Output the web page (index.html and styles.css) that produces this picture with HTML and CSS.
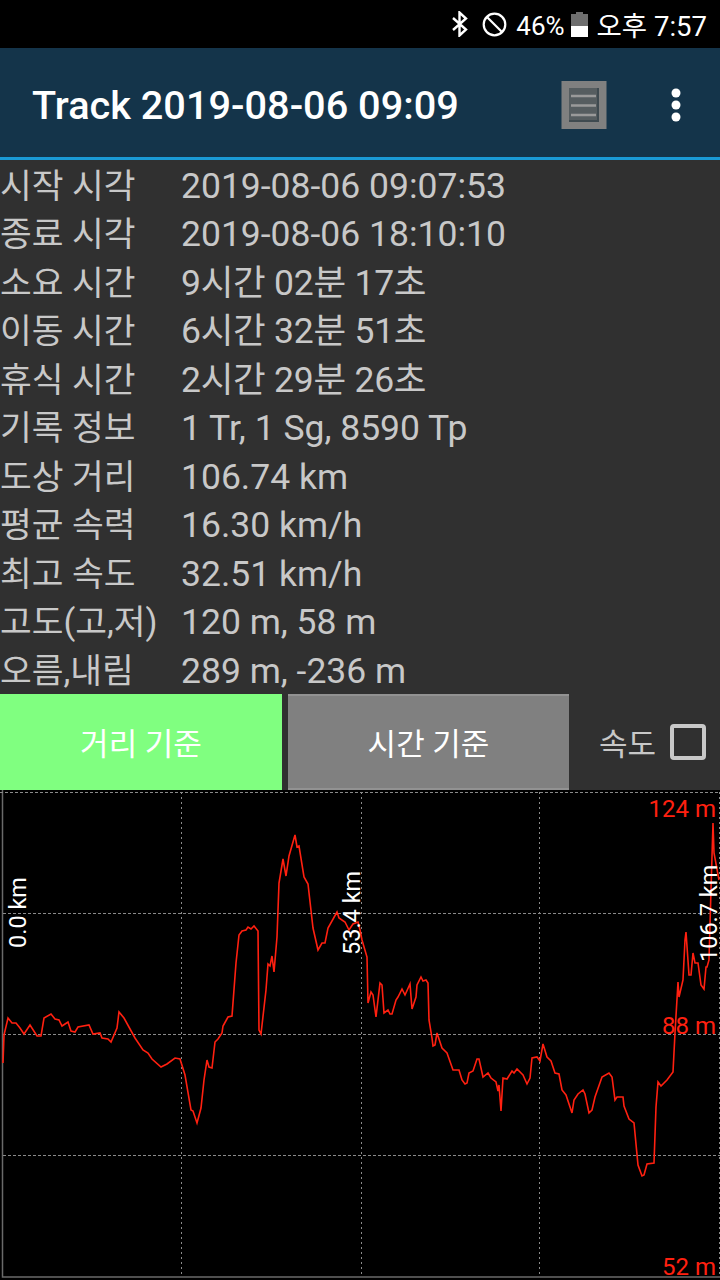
FILE: index.html
```html
<!DOCTYPE html>
<html lang="ko">
<head>
    <meta charset="UTF-8">
    <meta name="viewport" content="width=device-width, initial-scale=1.0">
    <title>Track 2019-08-06 09:09</title>
    <link rel="stylesheet" href="styles.css">
</head>
<body>
    <div class="statusBar">
        <svg class="btIcon" width="18" height="26" viewBox="0 0 18 26">
            <path d="M2 7 L15 18.5 L8.5 24.5 L8.5 1.5 L15 7.5 L2 19" fill="none" stroke="#fff" stroke-width="2.4"/>
        </svg>
        <svg class="dndIcon" width="25" height="25" viewBox="0 0 25 25">
            <circle cx="12.5" cy="12.5" r="10.8" fill="none" stroke="#fff" stroke-width="2.2"/>
            <path d="M5 5 L20 20" stroke="#fff" stroke-width="2.2"/>
        </svg>
        <span class="batteryText">46%</span>
        <svg class="batteryIcon" width="17" height="25" viewBox="0 0 17 25">
            <rect x="5" y="0" width="7" height="3" fill="#6e6e6e"/>
            <rect x="0" y="2" width="17" height="12" fill="#6e6e6e"/>
            <rect x="0" y="14" width="17" height="11" fill="#fff"/>
        </svg>
        <span class="clock">오후 7:57</span>
    </div>

    <header class="appBar">
        <h1>Track 2019-08-06 09:09</h1>
        <svg class="listIcon" width="48" height="50" viewBox="0 0 48 50">
            <rect x="1.5" y="1" width="45" height="48" fill="#808080"/>
            <rect x="9" y="8" width="30" height="34" fill="#3f4a50"/>
            <rect x="9" y="8" width="28" height="32" fill="#565d60"/>
            <path d="M11 16 H36 M11 25.500 H36 M11 35 H36" stroke="#9a9a9a" stroke-width="2.400"/>
        </svg>
        <svg class="moreIcon" width="10" height="34" viewBox="0 0 10 34">
            <circle cx="5" cy="5" r="4.500" fill="#fff"/>
            <circle cx="5" cy="17" r="4.500" fill="#fff"/>
            <circle cx="5" cy="29" r="4.500" fill="#fff"/>
        </svg>
    </header>

    <main>
        <dl class="stats">
            <dt>시작 시각</dt><dd>2019-08-06 09:07:53</dd>
            <dt>종료 시각</dt><dd>2019-08-06 18:10:10</dd>
            <dt>소요 시간</dt><dd class="duration">9시간 02분 17초</dd>
            <dt>이동 시간</dt><dd class="duration">6시간 32분 51초</dd>
            <dt>휴식 시간</dt><dd class="duration">2시간 29분 26초</dd>
            <dt>기록 정보</dt><dd>1 Tr, 1 Sg, 8590 Tp</dd>
            <dt>도상 거리</dt><dd>106.74 km</dd>
            <dt>평균 속력</dt><dd>16.30 km/h</dd>
            <dt>최고 속도</dt><dd>32.51 km/h</dd>
            <dt>고도(고,저)</dt><dd>120 m, 58 m</dd>
            <dt>오름,내림</dt><dd>289 m, -236 m</dd>
        </dl>

        <div class="controls">
            <button class="modeBtn modeBtnActive">거리 기준</button>
            <button class="modeBtn">시간 기준</button>
            <label class="speedToggle">속도<span class="checkBox"></span></label>
        </div>

        <svg class="chart" width="720" height="490" viewBox="0 790 720 490">
            <path class="gridSolid" d="M2.500 790 V1277 H720"/>
            <path class="gridH" d="M0 792.500 H720 M3 913.500 H720 M3 1034.500 H720 M3 1155.500 H720"/>
            <path class="gridV" d="M181.500 792 V1277 M361.500 792 V1277 M539.500 792 V1277 M719.500 792 V1277"/>
            <polyline class="track" points="3,1063 4,1035 8,1018 12,1023 16,1023 20,1028 24,1034 30,1025 37,1036 41,1036 44,1018 51,1014 55,1019 59,1020 62,1026 68,1022 71,1031 75,1032 78,1027 89,1025 93,1034 100,1033 102,1038 108,1039 111,1042 117,1028 119,1012 124,1018 135,1038 143,1050 148,1053 152,1059 161,1067 167,1064 175,1058 180,1059 185,1075 191,1110 193,1111 197,1123 201,1108 204,1080 207,1060 209,1067 212,1068 215,1042 218,1039 222,1033 223,1026 228,1017 232,1016 236,963 239,935 242,931 246,930 248,927 251,929 254,926 258,931 259,1030 261,1034 266,990 268,964 270,966 272,956 274,972 277,937 279,883 283,859 286,876 289,856 295,835 297,847 299,846 304,877 308,884 313,928 318,950 322,943 325,943 328,928 337,912 339,918 345,922 349,930 353,924 358,922 360,930 362,940 367,957 368,1003 371,992 373,995 376,1017 380,983 382,985 384,1013 388,1010 390,1014 392,1014 396,1000 398,997 402,989 405,995 410,984 412,1009 416,997 417,985 421,977 423,981 426,980 428,983 429,1020 432,1038 433,1046 435,1045 437,1033 442,1048 447,1053 453,1070 459,1070 462,1080 465,1084 467,1083 469,1073 473,1071 477,1059 479,1059 483,1077 488,1073 491,1078 496,1082 498,1091 499,1085 501,1111 503,1078 507,1079 512,1071 514,1073 517,1069 523,1075 527,1084 530,1078 532,1058 537,1057 540,1061 543,1044 547,1057 551,1061 555,1073 559,1074 562,1090 566,1095 572,1113 574,1100 578,1094 583,1090 585,1094 589,1113 592,1110 595,1097 602,1077 609,1073 612,1077 615,1100 617,1097 623,1097 624,1106 629,1119 634,1123 638,1165 642,1176 644,1175 647,1164 654,1163 656,1107 658,1082 661,1086 667,1080 673,1072 675,1033 678,982 679,997 683,980 685,940 686,932 689,975 691,975 693,953 695,963 698,963 701,985 704,989 706,967 707,967 709,960 711,890 713,823 714,853 719,880"/>
            <text class="altLabel" x="716" y="817">124 m</text>
            <text class="altLabel" x="716" y="1034">88 m</text>
            <text class="altLabel" x="716" y="1275">52 m</text>
            <text class="distLabel" transform="translate(26 948) rotate(-90)">0.0 km</text>
            <text class="distLabel" transform="translate(360 955) rotate(-90)">53.4 km</text>
            <text class="distLabel" transform="translate(717 962) rotate(-90)">106.7 km</text>
        </svg>
    </main>
</body>
</html>
```

FILE: styles.css
```css
html, body {
    margin: 0;
    padding: 0;
}

body {
    width: 720px;
    height: 1280px;
    overflow: hidden;
    background-color: #303030;
    font-family: Roboto, "Noto Sans CJK KR", sans-serif;
}

.statusBar {
    height: 48px;
    box-sizing: border-box;
    background-color: #000;
    color: #fff;
    display: flex;
    align-items: center;
    justify-content: flex-end;
    padding-right: 13px;
    font-size: 27.5px;
}

.btIcon {
    margin-right: 13px;
}

.dndIcon {
    margin-right: 9px;
}

.batteryText {
    margin-right: 6px;
    padding-top: 3px;
    font-size: 26px;
}

.batteryIcon {
    margin-right: 9px;
}

.appBar {
    height: 112px;
    box-sizing: border-box;
    background-color: #14344a;
    border-bottom: 3px solid #1a9ad6;
    display: flex;
    align-items: center;
    padding: 4px 39px 0 32px;
}

h1 {
    margin: 0;
    padding-top: 1px;
    flex: 1;
    color: #fff;
    font-size: 39.7px;
    font-weight: 500;
}

.listIcon {
    filter: blur(0.6px);
}

.moreIcon {
    margin-left: 63px;
}

.stats {
    margin: 0;
    display: grid;
    grid-template-columns: 181px 1fr;
    grid-auto-rows: 48.5px;
    color: #c8c8c8;
    white-space: nowrap;
}

.stats dt, .stats dd {
    margin: 0;
    padding-top: 3.5px;
    line-height: 45px;
}

.stats dt {
    font-size: 34.5px;
}

.stats dd {
    font-size: 35.5px;
}

.stats .duration {
    letter-spacing: -0.25px;
}

.controls {
    height: 96px;
    display: flex;
    align-items: stretch;
}

.modeBtn {
    width: 281px;
    margin: 0;
    padding: 0;
    border: none;
    border-top: 2px solid #929292;
    border-bottom: 2px solid #929292;
    background-color: #808080;
    color: #fff;
    font-family: inherit;
    font-size: 31px;
}

.modeBtnActive {
    width: 282px;
    margin-right: 6px;
    border-color: #80ff80;
    background-color: #80ff80;
}

.speedToggle {
    margin-left: 30px;
    display: flex;
    align-items: center;
    gap: 14px;
    color: #c8c8c8;
    font-size: 31px;
}

.checkBox {
    width: 36px;
    height: 36px;
    box-sizing: border-box;
    border: 4px solid #c8c8c8;
    border-radius: 4px;
}

.chart {
    display: block;
    background-color: #000;
}

.gridSolid {
    fill: none;
    stroke: #6a6a6a;
    stroke-width: 1.500;
}

.gridH {
    fill: none;
    stroke: #8a8a8a;
    stroke-dasharray: 3 2;
}

.gridV {
    fill: none;
    stroke: #8a8a8a;
    stroke-dasharray: 2 3;
}

.track {
    fill: none;
    stroke: #ff2010;
    stroke-width: 1.600;
}

.altLabel {
    fill: #ff2010;
    font-size: 24px;
    text-anchor: end;
}

.distLabel {
    fill: #fff;
    font-size: 23.5px;
}
```
